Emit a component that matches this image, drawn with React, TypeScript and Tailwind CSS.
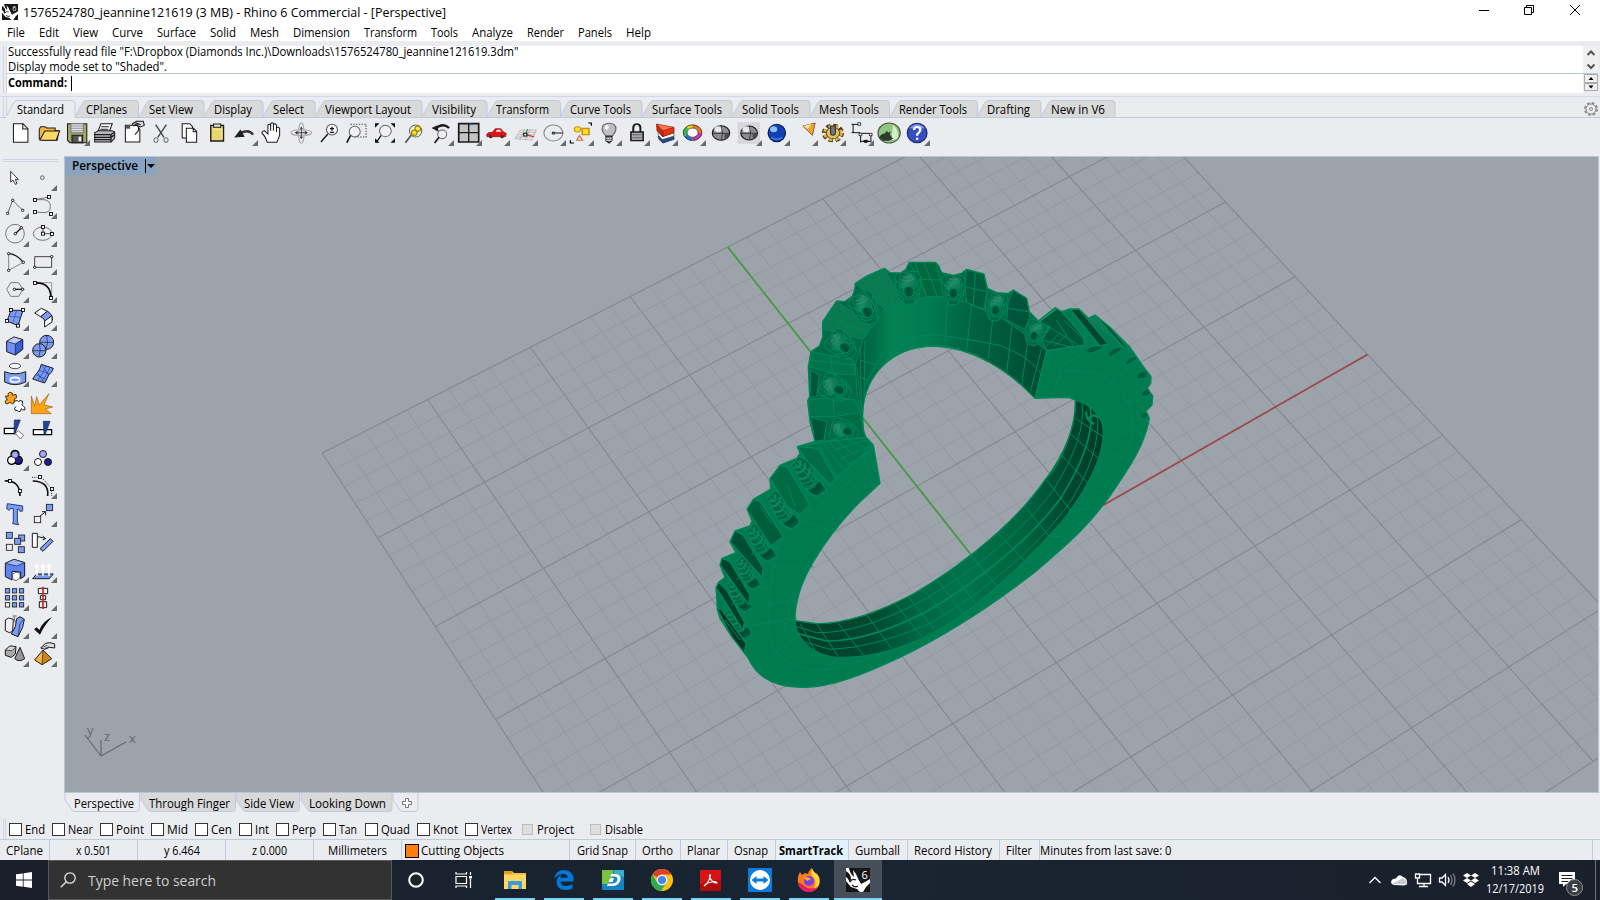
import { useLayoutEffect, useRef } from "react";
import type { ReactNode } from "react";

/* Text condensed horizontally to a given advance width. */
function Fit({ w, children, className = "" }: { w: number; children: string; className?: string }) {
  const ref = useRef<HTMLSpanElement>(null);
  useLayoutEffect(() => {
    const el = ref.current;
    if (!el) return;
    el.style.transform = "none";
    el.style.transform = `scaleX(${w / el.getBoundingClientRect().width})`;
  }, [w, children]);
  return (
    <span className={`block shrink-0 whitespace-pre ${className}`} style={{ width: w }}>
      <span ref={ref} className="inline-block origin-left">{children}</span>
    </span>
  );
}

/* ---------- construction grid ---------- */
type P = [number, number];
const anchors: [P, P][] = [
  [[-4, 4], [322.3, 453]],
  [[0, 4], [727.7, 247]],
  [[4, 0], [1367.5, 354.5]],
  [[-3, 0], [669.6, 752.4]],
];
function solveHomography(): number[] {
  const m: number[][] = [];
  for (const [[x, y], [u, v]] of anchors) {
    m.push([x, y, 1, 0, 0, 0, -u * x, -u * y, u]);
    m.push([0, 0, 0, x, y, 1, -v * x, -v * y, v]);
  }
  for (let i = 0; i < 8; i++) {
    let p = i;
    for (let r = i; r < 8; r++) if (Math.abs(m[r][i]) > Math.abs(m[p][i])) p = r;
    [m[i], m[p]] = [m[p], m[i]];
    for (let r = 0; r < 8; r++) {
      if (r === i) continue;
      const f = m[r][i] / m[i][i];
      for (let c = i; c < 9; c++) m[r][c] -= f * m[i][c];
    }
  }
  return m.map((row, i) => row[8] / row[i]);
}
const H = solveHomography();
const project = (x: number, y: number): P => {
  const d = H[6] * x + H[7] * y + 1;
  return [(H[0] * x + H[1] * y + H[2]) / d, (H[3] * x + H[4] * y + H[5]) / d];
};
const seg = (a: P, b: P) => {
  const [x1, y1] = project(...a);
  const [x2, y2] = project(...b);
  return `M${x1.toFixed(1)} ${y1.toFixed(1)}L${x2.toFixed(1)} ${y2.toFixed(1)}`;
};
let minor = "";
let major = "";
for (let i = -20; i <= 20; i++) {
  const t = i / 5;
  const d = seg([t, 4], [t, -4]) + seg([-4, t], [4, t]);
  if (i % 5 === 0) major += d;
  else minor += d;
}

/* ---------- ring ---------- */
const outer =
  "M345 604L330 545 323 482 329 470 325 380 333 335 358 318 368 292 368 245 410 183 434 185 456 170 464 150 466 130 500 108 553 85 570 98 602 99 618 88 628 67 707 67 715 76 725 98 760 106 785 100 800 88 852 102 862 145 890 158 925 160 940 150 980 175 988 215 1015 243 1065 203 1085 215 1110 207 1137 207 1165 235 1185 225 1230 262 1290 322 1330 380 1353 410 1352 430 1342 444 1358 468 1356 495 1338 513 1348 535C1335 610 1295 670 1262 720C1180 850 1100 915 1000 1000C870 1100 750 1180 600 1252C500 1298 400 1342 310 1342C210 1342 165 1300 145 1255L130 1235 95 1190 60 1135 52 1108 50 1070 48 1042 56 1027 75 1012 60 975 66 955 108 938 90 905 105 873 150 858 156 842 141 808 160 778 212 747 210 716 240 676 290 655 300 640 292 620Z";
const hole =
  "M540 730L520 615 498 592 490 575Q485 530 490 495C500 420 560 320 700 318C820 320 930 395 1005 475L1105 472 1126 480Q1128 540 1100 612T1035 720C960 830 815 960 640 1062Q470 1152 350 1151L285 1142Q284 1060 340 965T480 785Z";
const upperWall =
  "M1005 475L1040 332 985 290 910 237 800 187 735 172 680 170 600 190 555 207 520 255 488 300 466 375 470 450 484 540 490 560Q485 530 490 495C500 420 560 320 700 318C820 320 930 395 1005 475Z";
const lowerWall =
  "M1126 480Q1190 500 1208 555C1220 640 1160 750 1085 845C1000 940 900 1040 780 1130C660 1210 540 1255 410 1252C340 1245 290 1200 285 1142L350 1151Q470 1152 640 1062C815 960 960 830 1035 720Q1130 590 1126 480Z";

function Stone({ x, y, r = 0, s = 1 }: { x: number; y: number; r?: number; s?: number }) {
  return (
    <g transform={`translate(${x} ${y}) rotate(${r}) scale(${s})`}>
      <path d="M-40 -30L-30 -46 30 -46 40 -28 32 26 14 50 -14 50 -34 24Z" fill="#006541" stroke="#00875a" strokeWidth="3" />
      <ellipse cy="-16" rx="24" ry="28" fill="url(#gem)" />
      <path d="M-34 -18Q0 14 36 -18M-36 4Q0 46 36 4M-34 16Q0 58 34 16M-20 -44Q-36 0 -14 48M20 -44Q38 0 14 48M-40 -30L-14 10M40 -28L16 8" fill="none" stroke="#00875a" strokeWidth="3" />
      <circle cy="13" r="17" fill="url(#bore)" stroke="#00875a" strokeWidth="4" />
      <path d="M-14 -34Q0 -26 14 -34M-18 -24Q0 -14 18 -24" fill="none" stroke="#2a926d" strokeWidth="3" />
    </g>
  );
}

/* A setting on the left shoulder, seen nearly edge-on. */
function SideStone({ x, y, r = 0, s = 1 }: { x: number; y: number; r?: number; s?: number }) {
  return (
    <g transform={`translate(${x} ${y}) rotate(${r}) scale(${s})`} fill="none" strokeWidth="3">
      <path d="M-52 -22Q-20 -34 0 -22T56 -14L52 16Q20 30 -4 20T-50 8Z" fill="#00633f" stroke="#00875a" />
      <path d="M-44 -16Q-24 -4 -42 6M-30 -20Q-10 -4 -28 12M-14 -22Q10 0 -12 18" stroke="#12835c" strokeWidth="6" />
      <path d="M0 -20Q22 0 2 20M10 -18Q34 2 14 20M-50 0Q0 -10 56 2M-48 -8Q0 -20 54 -8" stroke="#008a5b" />
      <path d="M24 -16Q52 -16 56 -12L52 14Q36 24 18 22 34 6 24 -16Z" fill="url(#bore)" stroke="#00875a" />
    </g>
  );
}

function Ring() {
  return (
    <g transform="translate(700 240) scale(.3333333)" strokeLinejoin="round">
      <defs>
        <linearGradient id="upper" gradientUnits="userSpaceOnUse" x1="465" y1="0" x2="1040" y2="0">
          <stop offset="0" stopColor="#00553a" />
          <stop offset=".09" stopColor="#006c47" />
          <stop offset=".2" stopColor="#048255" />
          <stop offset=".4" stopColor="#007a50" />
          <stop offset=".6" stopColor="#006341" />
          <stop offset="1" stopColor="#004a30" />
        </linearGradient>
        <linearGradient id="lower" gradientUnits="userSpaceOnUse" x1="285" y1="0" x2="1212" y2="0">
          <stop offset="0" stopColor="#003c27" />
          <stop offset=".25" stopColor="#004a30" />
          <stop offset=".4" stopColor="#006743" />
          <stop offset=".55" stopColor="#00734b" />
          <stop offset=".75" stopColor="#00623f" />
          <stop offset=".88" stopColor="#00482f" />
          <stop offset="1" stopColor="#003b26" />
        </linearGradient>
        <linearGradient id="gem" x1="0" y1="0" x2="1" y2="1">
          <stop offset="0" stopColor="#00583a" />
          <stop offset=".45" stopColor="#1d8a64" />
          <stop offset="1" stopColor="#006b46" />
        </linearGradient>
        <linearGradient id="bore" x1="0" y1="0" x2="1" y2="0">
          <stop offset="0" stopColor="#007b51" />
          <stop offset=".4" stopColor="#004930" />
          <stop offset="1" stopColor="#006441" />
        </linearGradient>
        <clipPath id="silhouette"><path d={outer} /></clipPath>
      </defs>
      <path d={outer + hole} fillRule="evenodd" fill="#007b50" />
      <g clipPath="url(#silhouette)">
        <path d="M345 604L323 482 325 380 368 245 410 183 466 130 553 85 628 67 707 67 852 102 940 150 980 175 1015 243 1040 332 985 290 910 237 800 187 680 170 600 190 555 207 488 300 466 375 470 450 490 560 498 592Z" fill="#006a45" />
        <path d={upperWall} fill="url(#upper)" stroke="#00875a" strokeWidth="3" />
        <g fill="none" stroke="#00875a" strokeWidth="3">
          <path d="M742 174L735 322M815 192L800 332M880 218L865 356M936 255L920 400M985 292L965 436M1025 325L990 460" />
          <path d="M600 190L598 330M636 180L640 318M680 172L678 318" strokeWidth="2" />
          <path d="M495 440Q540 330 600 306T700 284T900 316Q990 350 1022 400M480 320L484 500M495 300L492 480M470 380L488 540" />
          <path d="M480 360L530 375M478 410L510 425" />
        </g>
        {/* bands between the upper stones */}
        <g stroke="#00875a" strokeWidth="3">
          <path d="M628 67L707 67 735 170 680 170 655 120Z" fill="#00673f" />
          <path d="M800 88L852 102 862 150 852 208 800 188 794 130Z" fill="#005c3b" />
          <path d="M940 150L980 175 990 228 975 268 920 240 925 185Z" fill="#00543a" />
          <path d="M466 130L553 85 612 188 555 207 520 180Z" fill="#0b7a52" />
          <path d="M410 183L368 245 374 268 490 298 512 258Z" fill="#0a7850" />
          <path d="M333 335L460 360 466 405 400 400 327 380Z" fill="#00734b" />
          <path d="M325 480L400 472 466 480 480 518 400 530 330 530Z" fill="#00714a" />
          <path d="M332 390L358 405 350 470 330 472ZM332 532L380 545 372 600 345 604Z" fill="#00553a" />
          <path d="M645 67L680 170M672 67L712 170M500 108L560 200M530 96L585 195M794 140L860 155M826 95L820 195M380 230L505 280M440 195L415 265M325 360L465 375M392 345L398 400M400 475L402 530M925 205L985 215M640 118L720 120" fill="none" />
        </g>
        <Stone x={625} y={142} r={-4} />
        <Stone x={760} y={148} s={0.92} />
        <Stone x={888} y={200} r={8} s={0.85} />
        <Stone x={1005} y={278} r={20} s={0.78} />
        <Stone x={496} y={205} r={-28} />
        <Stone x={425} y={315} r={-50} s={0.95} />
        <Stone x={406} y={445} r={-65} s={0.95} />
        <Stone x={432} y={572} r={-75} s={0.85} />
        {/* right shoulder */}
        <g stroke="#00875a" strokeWidth="4">
          <path d="M1015 243L1065 203 1085 215 1150 290 1155 315 1040 332 1025 300 1050 262Z" fill="#00573a" />
          <path d="M1110 207L1137 207 1225 312 1200 318Z" fill="#00462e" />
          <path d="M1185 225L1230 262 1290 330 1262 318Z" fill="#00502f" />
          <path d="M1048 262L1130 312M1070 240L1120 318M1028 300L1110 320M1090 240L1155 300M1040 318L1080 278M1060 320L1100 285M1130 235L1165 290M1150 270L1160 310" fill="none" strokeWidth="3" />
          <path d="M1018 243L1066 206" stroke="#1d9067" strokeWidth="8" />
          <path d="M1165 240L1185 225 1275 325" fill="#0f7d57" strokeWidth="3" />
          <path d="M1160 340Q1152 312 1215 318 1190 340 1160 340ZM1226 352Q1222 326 1262 320 1278 330 1226 352ZM1275 378Q1278 350 1310 348 1322 356 1275 378ZM1308 418Q1308 392 1338 394 1360 415 1308 418ZM1324 470Q1324 446 1345 447 1362 468 1324 470ZM1322 534Q1322 512 1344 520 1350 540 1322 534Z" fill="#005e3d" strokeWidth="3" />
        </g>
        <path d="M1040 332L1005 475" stroke="#00875a" strokeWidth="4" />
        <g fill="none" stroke="#00855a" strokeWidth="2.5">
          <path d="M1040 332L1150 316 1135 352 1090 372 1055 465M1090 395Q1230 380 1275 470T1275 630M1220 435L1290 380M1250 590L1345 540M1210 435L1170 480M1270 490L1350 470M1060 460L1085 395" />
          <path d="M1230 640L1290 660M1175 745L1230 765M1115 815L1185 800M1050 890L1125 888M975 965L1025 978M895 1030L935 1055M820 1098L825 1130M735 1150L733 1190M690 1190L688 1225" />
          <path d="M210 1170Q200 1260 330 1290 430 1295 600 1215M245 1265L210 1310M290 1080L190 1095M290 1135L150 1155M300 1185L190 1262M345 1240L240 1300M410 1252L350 1335M480 1245L440 1310M340 980L220 980M400 875L300 840" />
          <path d="M250 880Q200 1000 208 1190M400 740L415 748 455 720 485 780" />
        </g>
        {/* lower inner wall */}
        <path d={lowerWall} fill="url(#lower)" stroke="#00875a" strokeWidth="3" />
        <g fill="none" stroke="#00875a" strokeWidth="3">
          <path d="M1146 490Q1160 590 1060 750C980 860 820 1000 650 1090Q480 1180 350 1178L290 1160" />
          <path d="M1170 500Q1190 600 1085 770C1000 890 830 1030 670 1120Q500 1205 380 1203L290 1180" strokeWidth="5" />
          <path d="M1192 520Q1205 640 1105 795C1010 920 850 1060 690 1150Q520 1225 390 1228L310 1205" />
          <path d="M300 1150L345 1232M350 1151L415 1250M415 1150L490 1245M500 1125L575 1225M585 1090L665 1190M625 1070L700 1165M665 1045L740 1130M710 1020L790 1120M750 990L830 1095M815 948L900 1050M895 880L980 970M975 800L1050 892M1040 720L1115 815M1085 645L1168 735M1110 580L1200 660M1125 535L1210 590" />
          <path d="M1158 515Q1160 545 1182 552M1165 540Q1176 518 1196 532" strokeWidth="7" />
        </g>
        {/* left shoulder */}
        <g stroke="#00875a" strokeWidth="4">
          <path d="M292 620L380 604 498 592 520 618 410 712 390 735 315 655Z" fill="#00734b" />
          <path d="M355 612L412 712M368 608L432 690M385 604L450 675M400 630L500 600M420 655L515 618M405 600L470 650M430 680L520 630M440 598L500 625" fill="none" strokeWidth="3" />
        </g>
        <SideStone x={322} y={712} r={47} s={1.2} />
        <SideStone x={246} y={812} r={47} s={1.15} />
        <SideStone x={180} y={910} r={50} s={1.1} />
        <SideStone x={140} y={1000} r={53} s={0.95} />
        <SideStone x={115} y={1068} r={52} s={0.95} />
        <SideStone x={112} y={1150} r={48} s={0.95} />
        <g stroke="#00875a" strokeWidth="4">
          <path d="M210 716L240 676 262 680 330 795 300 825 262 800Z" fill="#006a45" />
          <path d="M141 808L160 778 180 785 250 890 212 918Z" fill="#005e3d" />
          <path d="M90 905L105 873 130 885 190 985 186 1012Z" fill="#004e33" />
          <path d="M60 975L66 955 90 965 150 1065 146 1094Z" fill="#00432b" />
          <path d="M48 1042L56 1027 80 1050 133 1145 130 1172Z" fill="#003f28" />
          <path d="M52 1108L62 1105 138 1210 133 1240 95 1190Z" fill="#003824" />
          <path d="M292 620L315 655 390 735 408 718 355 625Z" fill="#006d48" />
          <path d="M285 800L262 735M215 850L180 800M155 945L175 905 130 890M110 1020L130 990M95 1095L110 1075M120 1200L75 1140" fill="none" strokeWidth="3" />
        </g>
      </g>
      <path d={outer + hole} fill="none" stroke="#008558" strokeWidth="4" />
    </g>
  );
}

function Viewport() {
  return (
    <svg viewBox="65 157 1533 635" className="block h-full w-full" fill="none">
      <rect x="65" y="157" width="1533" height="635" fill="#9da3aa" />
      <path d={minor} stroke="#92989f" strokeWidth="1" />
      <path d={major} stroke="#86868d" strokeWidth="1.1" />
      <path d={seg([0, 4], [0, 0])} stroke="#459a45" strokeWidth="1.8" />
      <path d={seg([0, 0], [4, 0])} stroke="#9c4a4a" strokeWidth="1.8" />
      <Ring />
      <path d="M85 735L101 756M101 756V740M101 756L126 742" stroke="#66696d" strokeWidth="1.2" />
      <g fill="#66696d" className="font-['Open_Sans',sans-serif] text-[13px]">
        <text x="87" y="735">y</text>
        <text x="104" y="740.500">z</text>
        <text x="129" y="743">x</text>
      </g>
    </svg>
  );
}

/* ---------- icons ---------- */
const K = "#1b1b1b";
const blue = "#7b9cf5";

function Cell({ box, flyout, children }: { box: string; flyout?: boolean; children: ReactNode }) {
  return (
    <div className="relative h-7 w-7 shrink-0">
      <svg viewBox={box} preserveAspectRatio="none" className="block h-7 w-7" fill="none" stroke={K} strokeWidth="3">
        {children}
      </svg>
      {flyout && (
        <svg viewBox="0 0 6 6" className="absolute right-0 bottom-[1px] h-1.5 w-1.5">
          <path d="M6 0V6H0Z" fill="#6a6a6e" />
        </svg>
      )}
    </div>
  );
}

const sq = (x: number, y: number, s = 9) => <rect x={x - s / 2} y={y - s / 2} width={s} height={s} fill="#fff" stroke="#000" strokeWidth="2.6" />;
const pt = (x: number, y: number, r = 3.6) => <circle cx={x} cy={y} r={r} fill="#fff" stroke="#000" strokeWidth="2.6" />;
const box3 = (x: number, y: number, s: number, fill: string) => <rect x={x} y={y} width={s} height={s} fill={fill} stroke="#222" strokeWidth="2.6" />;

const mainA: [ReactNode, boolean?][] = [
  [<path d="M39 371H67L81 386V427H39ZM66 371V387H81" fill="#fff" />],
  [<><path d="M114 388V417L122 421H166L171 392H160V384H136L130 380H118Z" fill="#f0b840" /><path d="M116 420L130 393H173L163 421Z" fill="#fcd765" /></>],
  [<><path d="M196 371H252V428H203L196 421Z" fill="#a8a860" /><path d="M206 371H242V398H206Z" fill="#e4e8ec" stroke="#777" /><path d="M206 378H242M206 385H242M206 392H242" stroke="#8a8f96" /><path d="M209 406H240V428H209Z" fill="#555" /><path d="M228 410H236V424H228Z" fill="#eee" stroke="none" /></>, true],
  [<><path d="M284 396L293 371H326L317 396Z" fill="#fff" /><path d="M294 380H316M291 388H314" /><path d="M275 398L286 392H325L333 396V414L323 426H275Z" fill="#b9b9bd" /><path d="M275 404H322L333 396M275 412H322L333 404M275 419H322M322 404V426" strokeWidth="4" /></>],
  [<><path d="M364 376H398L406 388V426H364Z" fill="#fff" /><path d="M366 380H378M366 384H378" /><path d="M384 372L396 364H416L419 376 408 381 396 376 388 378Z" fill="#ddd" /><path d="M390 372L402 376M394 368L408 374M402 380V392L392 404" /></>],
  [<><path d="M452 374L476 412M483 374L458 412" strokeWidth="4" stroke="#444" /><ellipse cx="453" cy="420" rx="6" ry="7" stroke="#777" /><ellipse cx="482" cy="420" rx="6" ry="7" stroke="#777" /></>],
  [<><path d="M529 371H551L559 380V414H529Z" fill="#fff" /><path d="M541 385H562L571 394V427H541ZM561 385V395H571" fill="#fff" /></>],
  [<><path d="M612 376H649V423H612Z" fill="#e8d56e" strokeWidth="4" /><path d="M620 372H641V382H620Z" fill="#e4e4e4" /><path d="M618 388H644V416" stroke="#f5eaa0" /></>],
  [<><path d="M735 404Q722 386 698 400" stroke="#333" strokeWidth="7" /><path d="M683 411L698 391 708 409Z" fill="#222" /></>, true],
  [<path d="M776 427Q770 408 763 402T768 392L778 402V376Q782 370 786 376V392 371Q790 365 794 371V392 374Q799 368 803 376V396 384Q809 378 812 386V406L804 427Z" fill="#fff" />],
  [<><ellipse cx="875" cy="398" rx="30" ry="9" stroke="#aaa" /><ellipse cx="875" cy="399" rx="8" ry="31" stroke="#aaa" /><path d="M862 398H888M875 386V412" strokeWidth="3" stroke="#444" /><path d="M856 398L864 392V404ZM894 398L886 392V404ZM870 386H880L875 380ZM870 410H880L875 417Z" fill="#333" stroke="none" /></>],
  [<><circle cx="964" cy="389" r="16" stroke="#555" fill="#f6f6f8" /><path d="M958 386H970M964 380V392M958 397H970M952 402L932 426" strokeWidth="4" /></>],
  [<><path d="M1018 373H1063V411H1030" strokeDasharray="4 4" stroke="#444" /><circle cx="1030" cy="395" r="16" stroke="#666" fill="#f0f0f3" /><path d="M1018 406L1007 428" strokeWidth="5" /></>],
  [<><circle cx="1119" cy="393" r="17" stroke="#666" fill="#f0f0f3" /><path d="M1107 406L1092 428" strokeWidth="4" /><path d="M1089 370H1102L1089 383ZM1134 370H1147V383ZM1147 428H1134L1147 415ZM1089 428V415L1102 428Z" fill="#111" stroke="none" /></>],
  [<><circle cx="1207" cy="393" r="18" stroke="#666" fill="#f0f0e0" /><path d="M1194 406L1177 428" strokeWidth="5" stroke="#555" /><circle cx="1213" cy="386" r="8" fill="#ffe640" stroke="#8a7a00" /><circle cx="1203" cy="398" r="8" fill="#ffd820" stroke="#8a7a00" /></>],
  [<><path d="M1304 384Q1286 366 1264 386" strokeWidth="7" /><path d="M1253 384L1270 376 1274 396Z" fill="#222" stroke="none" /><circle cx="1284" cy="403" r="13" stroke="#666" fill="#f0f0f3" /><path d="M1275 412L1262 429" strokeWidth="5" /></>, true],
  [<><path d="M1332 371H1390V426H1332Z" fill="#c4c4c4" strokeWidth="5" /><path d="M1361 371V426M1332 398H1390" strokeWidth="4" /><path d="M1362 372H1372" stroke="#1848c0" strokeWidth="4" /></>, true],
  [<><path d="M1413 404Q1416 396 1430 397L1438 386H1454L1462 396 1470 400 1468 410H1414Z" fill="#e01414" stroke="#8a0c0c" strokeWidth="2" /><path d="M1440 395L1443 389H1452L1456 395Z" fill="#fff" stroke="none" /><circle cx="1425" cy="410" r="5" fill="#333" stroke="none" /><circle cx="1458" cy="410" r="5" fill="#333" stroke="none" /></>, true],
];

const mainB: [ReactNode, boolean?][] = [
  [<><path d="M38 146L52 120H92L80 150ZM46 134H88M62 118L50 150M76 118L64 150M42 141H84M50 127H90" stroke="#aaa" strokeWidth="2" /><path d="M64 134L70 118" stroke="#1a9a3a" /><path d="M66 134L86 140" stroke="#d22" /><path d="M60 130H68V138H60Z" fill="#fff" /></>, true],
  [<><circle cx="135" cy="129" r="24" stroke="#8a8a8e" /><path d="M135 129H159" /><circle cx="135" cy="129" r="3" fill="#fff" /></>, true],
  [<><circle cx="196" cy="118" r="8" fill="#ffe030" stroke="#d0960c" /><path d="M208 115H225V134H208Z" fill="#ffe030" stroke="#d08a0c" strokeWidth="4" /><path d="M194 151L201 137 209 151Z" stroke="#c87040" /><path d="M223 99H231V107M178 151V159H187" stroke="#000" /></>, true],
  [<><path d="M258 118Q258 100 276 100T293 118Q292 128 284 138H268Q260 130 258 118Z" fill="#bfbfc3" stroke="#666" /><path d="M268 139H283V152L276 159 268 152Z" fill="#777" /><path d="M268 145H283M268 151H283" stroke="#ccc" /><ellipse cx="270" cy="112" rx="5" ry="7" fill="#f4f4f6" stroke="none" /></>, true],
  [<><path d="M337 126V112Q338 102 346 102T355 112V126" strokeWidth="5" /><path d="M331 126H362V152H331Z" fill="#a8a8ac" strokeWidth="4" /><path d="M335 134H358M335 143H358" stroke="#666" /></>, true],
  [<><path d="M412 158V148L440 138V128L412 138 400 124V134Z" fill="#fff" stroke="#555" strokeWidth="2" /><path d="M400 138L412 150 440 140V148L412 159 402 148Z" fill="#1a50b0" stroke="#222" strokeWidth="2" /><path d="M396 102L412 122V141L397 122Z" fill="#c8280c" stroke="#811" strokeWidth="2" /><path d="M412 122L440 112V128L412 140Z" fill="#e8330f" stroke="#811" strokeWidth="2" /><path d="M396 102L440 112 412 122Z" fill="#ff7a48" stroke="#a22" strokeWidth="2" /></>, true],
  [<><circle cx="487" cy="128" r="19" stroke="#e6dc10" strokeWidth="9" /><path d="M487 109A19 19 0 0 1 506 128" stroke="#f07020" strokeWidth="9" /><path d="M506 128A19 19 0 0 1 487 147" stroke="#d030c0" strokeWidth="9" /><path d="M487 147A19 19 0 0 1 470 136" stroke="#2070e0" strokeWidth="9" /><path d="M470 136A19 19 0 0 1 474 114" stroke="#30c050" strokeWidth="9" /><circle cx="487" cy="128" r="23.500" strokeWidth="2" /><circle cx="487" cy="128" r="14" strokeWidth="2" fill="#fff" /></>, true],
  [<><circle cx="559" cy="129" r="22" fill="#8e8e92" /><ellipse cx="552" cy="118" rx="10" ry="9" fill="#e8e8ea" stroke="none" /><path d="M568 132H580Q578 144 568 149Z" fill="#4c4c50" stroke="none" /><path d="M537 130H581M559 107Q566 128 560 151" strokeWidth="2" /></>],
  [<><path d="M602 98H656V160H602Z" fill="#d9d9dd" stroke="#bbb" strokeDasharray="2 3" strokeWidth="2" /><circle cx="630" cy="129" r="21" fill="#8e8e92" /><ellipse cx="623" cy="118" rx="10" ry="9" fill="#e8e8ea" stroke="none" /><path d="M639 132H650Q648 144 639 148Z" fill="#4c4c50" stroke="none" /><path d="M609 130H651M630 108Q637 128 631 150" strokeWidth="2" /></>, true],
  [<><ellipse cx="700" cy="129" rx="22" ry="26" fill="#1240b4" stroke="#0a1c50" /><ellipse cx="692" cy="118" rx="9" ry="9" fill="#8fc0ff" stroke="none" /><path d="M686 142Q700 154 714 142" stroke="#3a78e8" strokeWidth="5" /></>, true],
  [<><path d="M766 108L797 99 790 136Z" fill="#f2a52c" stroke="#5a3a08" strokeWidth="2" /><path d="M767 108L788 101 778 118Z" fill="#ffe2a0" stroke="none" /></>, true],
  [<><circle cx="842" cy="129" r="21" stroke="#4a3b10" strokeWidth="14" strokeDasharray="10 6.5" /><circle cx="842" cy="129" r="20" stroke="#d8b050" strokeWidth="10" strokeDasharray="8 8.5" /><circle cx="842" cy="129" r="17" fill="#e3c060" stroke="#6a5418" /><path d="M836 108H848V132Q842 140 836 132Z" fill="#777" stroke="#333" /></>, true],
  [<><path d="M893 103V128M889 103H909M889 128H911M912 132V158M938 132V158M915 130H934M912 154H938M918 154L924 150V158ZM932 154L926 150V158Z" stroke="#000" strokeWidth="2.5" /><path d="M905 98H912V106H905ZM908 130H915V137H908ZM934 130H941V137H934Z" fill="#fff" stroke="#000" strokeWidth="2" /></>, true],
  [<><ellipse cx="984" cy="129" rx="28" ry="30" fill="#94c483" stroke="#4c5a4a" /><path d="M994 104Q1012 124 1004 148L990 150Z" fill="#d4eec6" stroke="none" /><path d="M958 144Q962 132 974 130L978 122 982 128 988 124 986 134 994 146 984 152 970 152Z" fill="#2c3c2a" stroke="none" /></>],
  [<><ellipse cx="1055" cy="129" rx="25" ry="29" fill="#3450c0" stroke="#1a2a70" /><path d="M1035 115Q1055 90 1075 115" fill="#7d98ee" stroke="none" /><path d="M1047 120Q1048 110 1056 111T1063 121Q1060 128 1055 133V137M1055 143V149" stroke="#fff" strokeWidth="6" /></>, true],
];

const sideA: [ReactNode, boolean?][] = [
  [<path d="M32 64V96L39 90 46 103 51 101 46 88H55Z" fill="#fff" strokeWidth="2.6" />],
  [<circle cx="127" cy="83" r="5.5" fill="#fff" stroke="#555" />, true],
  [<><path d="M23 190L38 151 68 181" stroke="#666" />{pt(23, 190)}{pt(38, 151)}{pt(68, 181)}</>, true],
  [<><path d="M105 149H132Q152 152 151 170T132 188L105 186M105 149L147 141" stroke="#777" />{sq(105, 150)}{sq(147, 141)}{sq(105, 186)}{sq(153, 192)}</>, true],
  [<><circle cx="45" cy="251" r="28" stroke="#777" /><path d="M46 251L64 233" strokeWidth="4" />{pt(46, 251)}{pt(64, 233)}</>, true],
  [<><ellipse cx="128" cy="251" rx="28" ry="20" stroke="#777" /><path d="M129 231V251H156" stroke="#555" />{sq(129, 231)}{sq(129, 251)}{sq(156, 252)}</>, true],
  [<><path d="M26 361V311M26 361L70 337" stroke="#888" /><path d="M26 311Q50 312 70 337" stroke="#111" strokeWidth="3.5" />{pt(26, 311)}{pt(26, 361)}{pt(70, 337)}</>, true],
  [<><path d="M104 320H155V352H104Z" stroke="#444" />{pt(155, 320)}{pt(104, 352)}</>, true],
  [<><path d="M32 398H56L69 418 56 439H32L20 418Z" stroke="#777" /><path d="M43 418H68" strokeWidth="4" />{pt(43, 418)}{pt(68, 418)}</>, true],
  [<><path d="M104 398H155V442" stroke="#999" /><path d="M104 399Q152 396 153 444" strokeWidth="5" stroke="#000" />{sq(105, 399)}{sq(153, 444)}</>, true],
  [<><path d="M33 481L69 481 54 527 21 513Z" fill={blue} /><path d="M28 498L63 502M50 481L38 520" stroke="#334a9a" strokeWidth="2" />{sq(33, 480)}{sq(69, 480)}{sq(21, 513)}{sq(54, 527)}</>, true],
  [<><path d="M104 489L124 475 142 484 122 500Z" fill="#fff" /><path d="M122 500L142 484Q156 490 157 510L135 514Q134 506 122 500Z" fill={blue} /><path d="M134 513L156 497V516L134 531Z" fill="#fff" /></>, true],
  [<><path d="M20 574L42 561 68 569V598L46 615 20 605Z" fill="#6f90fa" /><path d="M20 574L42 561 68 569 46 582Z" fill="#bccbfb" strokeWidth="2" /><path d="M46 582L68 569V598L46 615Z" fill="#3a5fd4" strokeWidth="2" /></>, true],
  [<><circle cx="140" cy="577" r="21" fill={blue} /><circle cx="118" cy="601" r="20" fill={blue} /><path d="M120 577H160M140 556Q146 580 138 598M98 602H138M118 582Q124 600 117 620" strokeWidth="2" /></>, true],
  [<><ellipse cx="45" cy="648" rx="17" ry="8" stroke="#555" fill="#f5f5f7" /><path d="M14 665Q45 678 77 665V696Q45 712 14 696Z" fill={blue} /><ellipse cx="45" cy="689" rx="14" ry="7" stroke="#fff" strokeWidth="5" /></>, true],
  [<><path d="M124 643L160 655Q156 668 146 675 142 685 134 699L98 687Q106 674 112 668 120 660 124 643Z" fill={blue} /><path d="M116 660L150 672M106 674L140 688M138 648Q130 672 112 692M150 652Q142 676 124 696M112 668L134 699M124 643L146 675" stroke="#24409a" strokeWidth="2" /></>, true],
  [<><path d="M16 738L25 739Q22 727 31 727T37 736L48 733 50 743Q42 744 43 750T38 762L28 756Q24 766 17 760 13 750 22 750Z" fill="#ffa51c" stroke="#4a3008" /><path d="M42 758Q44 750 52 752 56 758 60 752 70 750 68 760 62 764 70 768 78 772 74 780 66 780 64 776 64 786 55 785 52 778 46 782 40 774 48 770 46 764Z" fill="#fff" /></>],
  [<path d="M94 791V738L104 768 110 740 118 764 147 731 132 764 158 771 136 777 154 791Z" fill="#ffa212" stroke="#7a4200" strokeWidth="1.500" />],
];

const sideB: [ReactNode, boolean?][] = [
  [<><path d="M13 85H46V101H13Z" fill="#fff" strokeWidth="3.6" stroke="#000" /><path d="M43 60H61L45 101H42Z" fill="#25429a" stroke="#14255c" strokeWidth="2" /><path d="M46 100L55 92 71 106 61 117Z" fill="#fff" stroke="#777" /></>],
  [<><path d="M100 89H155V104H100Z" fill="#fff" strokeWidth="3.6" stroke="#000" /><path d="M130 64H150L136 103H132Z" fill="#25429a" stroke="#14255c" strokeWidth="2" /></>],
  [<><g strokeWidth="8" stroke="#000"><circle cx="45" cy="163" r="10" /><circle cx="35" cy="181" r="10" /><circle cx="55" cy="181" r="10" /></g><circle cx="35" cy="181" r="10" fill="#fff" stroke="none" /><circle cx="55" cy="181" r="10" fill="#1e1e8c" stroke="none" /><circle cx="45" cy="164" r="10" fill="#a8a8ff" stroke="#223" strokeWidth="2" /></>, true],
  [<><circle cx="129" cy="162" r="10.5" fill="#a8a8ff" /><circle cx="114" cy="186" r="10.5" fill="#fff" /><circle cx="144" cy="186" r="10.5" fill="#1e1e8c" /></>],
  [<><path d="M14 243Q60 240 60 288" strokeWidth="5" stroke="#111" />{sq(30, 243)}{sq(60, 273)}</>],
  [<><path d="M96 232H112M130 238L150 260M155 272V288" strokeDasharray="3 4" /><path d="M98 243Q148 244 143 288" strokeWidth="5" stroke="#111" />{sq(120, 231)}{sq(156, 267)}</>, true],
  [<path d="M22 311L68 318V333L60 334 58 328 52 327V366L56 374 38 371 40 364V326L32 325 28 331 20 326Z" fill={blue} stroke="#223a80" />],
  [<><path d="M118 350L136 336M126 335H137V346" />{box3(103, 349, 19, "#eee")}{box3(139, 313, 19, blue)}</>, true],
  [<>{box3(19, 397, 18, blue)}{box3(56, 405, 18, blue)}{box3(44, 415, 18, blue)}{box3(19, 433, 18, "#eee")}{box3(55, 440, 18, blue)}</>],
  [<><path d="M97 400H112V442H97Z" fill="#fff" /><path d="M114 410L136 415M128 408L137 416 128 420" /><path d="M120 446L151 416 159 424 129 454Z" fill={blue} /></>],
  [<><path d="M16 490L42 478 74 488V528L62 536V516L36 514V540L16 530Z" fill="#5f82f2" /><path d="M16 490L42 478 74 488 50 498Z" fill="#9db4fa" strokeWidth="2" /><path d="M38 522L48 516 60 520V534L48 542 38 538Z" fill="#fff" strokeWidth="2" /></>, true],
  [<><path d="M110 522H160L148 536H98Z" fill={blue} /><path d="M111 527V498M129 527V498M147 527V498" stroke="#fff" strokeWidth="5" /><path d="M103 502L111 490 119 502ZM121 502L129 490 137 502ZM139 502L147 490 155 502Z" fill="#fff" stroke="none" /></>, true],
  [<>{[566, 587, 608].map((y) => [16, 37, 58].map((x) => <g key={`${x}-${y}`}>{box3(x, y, 13, x === 16 && y === 608 ? "#eee" : blue)}</g>))}</>, true],
  [<><path d="M115 565H143V581H115ZM121 587H137V599H121ZM118 605H140V623H118Z" fill="#eee" /><path d="M129 560V627" stroke="#d42020" strokeWidth="5" /></>, true],
  [<><path d="M16 660L26 654 40 658 38 694 28 698 16 692Z" fill="#f0f0f0" /><path d="M50 656L60 650 73 658 68 682 54 710 34 702 46 680Z" fill={blue} /><path d="M73 658L60 670 54 710M42 650L46 668M38 648H50" strokeWidth="2" /></>, true],
  [<path d="M102 688L110 682 118 690Q130 662 156 652 134 674 120 704Z" fill="#111" stroke="none" />, true],
  [<><path d="M16 750L30 738 48 740 46 762 34 772 16 766Z" fill="#aaa" /><path d="M16 750L30 738 48 740 36 752Z" fill="#d8d8d8" strokeWidth="2" /><path d="M60 742L44 776Q58 788 74 776Z" fill="#999" /></>, true],
  [<><path d="M104 780L129 750 155 776 126 794Z" fill="#f5b63a" /><path d="M129 750L155 776 126 794Z" fill="#c98516" strokeWidth="2" /><path d="M122 744L136 730 150 728 164 732V744L148 742 134 748Z" fill="#ddd" /><path d="M128 742L142 736M134 746L146 740" strokeWidth="2" /></>, true],
];

/* ---------- tabs ---------- */
function TopTab({ label, w, tw, active }: { label: string; w: number; tw: number; active?: boolean }) {
  return (
    <div className="relative flex h-[17px] shrink-0 items-center justify-center pt-[3px] pr-[3px]" style={{ width: w }}>
      <svg viewBox={`0 0 ${w} 17`} className="absolute inset-0 h-full w-full overflow-visible" fill="none">
        <path d={`M-1 17L7 2.5Q8 .5 11 .5H${w - 4}Q${w - 1} .5 ${w - 1} 3.500V17`} fill={active ? "#ebecf0" : "#d9d9d9"} stroke="#c0c9de" />
        {active && <path d={`M-1 17H${w - 1}`} stroke="#ebecf0" strokeWidth="2" />}
      </svg>
      <Fit w={tw} className="relative">{label}</Fit>
    </div>
  );
}

function BottomTab({ label, w, tw, active }: { label?: string; w: number; tw?: number; active?: boolean }) {
  return (
    <div className="relative flex h-[19px] shrink-0 items-center justify-center pt-[3px] pl-[2px]" style={{ width: w }}>
      <svg viewBox={`0 0 ${w} 19`} className="absolute inset-0 h-full w-full overflow-visible" fill="none">
        <path d={`M0 0V7L7 17Q8 18.500 10 18.500H${w - 4}Q${w - 1} 18.500 ${w - 1} 15.500V0`} fill={active ? "#ebecf0" : "#d9d9d9"} stroke="#c0c9de" />
      </svg>
      {label && tw ? (
        <Fit w={tw} className="relative">{label}</Fit>
      ) : (
        <svg viewBox="0 0 10 10" className="relative mb-[2px] h-2.5 w-2.5" fill="#fff" stroke="#777">
          <path d="M3.500 .5H6.500V3.500H9.500V6.500H6.500V9.500H3.500V6.500H.5V3.500H3.500Z" />
        </svg>
      )}
    </div>
  );
}

const menus: [string, number][] = [["File", 18], ["Edit", 20], ["View", 25], ["Curve", 31], ["Surface", 39], ["Solid", 26], ["Mesh", 29], ["Dimension", 57], ["Transform", 53], ["Tools", 27], ["Analyze", 41], ["Render", 37], ["Panels", 34], ["Help", 25]];
const topTabs: [string, number, number][] = [["Standard", 69, 47], ["CPlanes", 63.5, 41], ["Set View", 65, 44], ["Display", 59, 38], ["Select", 52, 31], ["Viewport Layout", 107, 86], ["Visibility", 65, 44], ["Transform", 73.5, 53], ["Curve Tools", 82, 61], ["Surface Tools", 90, 70], ["Solid Tools", 78, 57], ["Mesh Tools", 79.5, 60], ["Render Tools", 87.5, 68], ["Drafting", 64, 43], ["New in V6", 74, 54]];
const snaps: [string, number, number][] = [["End", 43, 20], ["Near", 48, 25], ["Point", 51, 28], ["Mid", 44, 21], ["Cen", 44, 21], ["Int", 37, 14], ["Perp", 47, 24], ["Tan", 42, 18], ["Quad", 52, 29], ["Knot", 48, 25], ["Vertex", 56.5, 31]];
const panes: [string, number, number, boolean?][] = [["Grid Snap", 66, 51], ["Ortho", 44.5, 31], ["Planar", 47, 33], ["Osnap", 48, 34], ["SmartTrack", 73, 64, true], ["Gumball", 59, 45], ["Record History", 92, 78], ["Filter", 40, 26]];

function Rhino({ className }: { className: string }) {
  return (
    <svg viewBox="0 0 24 24" className={className}>
      <rect width="24" height="24" fill="#161616" />
      <path d="M0 3Q5 6 5 11L4 15Q2 10 0 9V13L5 19 11 21 14 24 17 24 20 19 24 15V11L19 14 15 16Q12 11 10 6L7 2 8 9Q4 6 3 0H0Z" fill="#fff" />
      <path d="M4 14Q6 10 10 12M6 17Q9 20 12 18" fill="none" stroke="#161616" strokeWidth="1.200" />
      <text x="15.500" y="10.500" fill="#fff" className="font-['Open_Sans',sans-serif] text-[11px]">6</text>
    </svg>
  );
}

function TaskApp({ children, active }: { children: ReactNode; active?: boolean }) {
  return (
    <div className={active ? "relative ml-px flex h-10 w-12 shrink-0 items-center justify-center bg-[#464f59]" : "relative flex h-10 w-[49px] shrink-0 items-center justify-center"}>
      {children}
      <div className={active ? "absolute bottom-0 left-0 h-0.5 w-full bg-[#78d4f8]" : "absolute bottom-0 left-[5px] h-0.5 w-10 bg-[#78d4f8]"} />
    </div>
  );
}

export default function App() {
  return (
    <div className="flex h-[900px] w-[1600px] flex-col overflow-hidden bg-[#ebecf0] font-['Open_Sans',sans-serif] text-[12px] leading-none text-black">
      {/* title bar */}
      <div className="flex h-6 shrink-0 items-center bg-white pl-[2px]">
        <Rhino className="h-4 w-4" />
        <Fit w={423} className="ml-[5px] pt-px text-[12.5px] leading-4">1576524780_jeannine121619 (3 MB) - Rhino 6 Commercial - [Perspective]</Fit>
        <svg viewBox="1470 0 130 24" className="ml-auto h-6 w-[130px]" fill="none" stroke="#000">
          <path d="M1479 10.500H1489M1524.500 7.500H1531.500V14.500H1524.500ZM1526.500 7V5.500H1533.500V12.500H1532M1570 5L1580 15M1580 5L1570 15" />
        </svg>
      </div>

      {/* menu bar */}
      <div className="flex h-[17px] shrink-0 items-center gap-[14px] bg-white pt-px pl-[7px]">
        {menus.map(([m, w]) => <Fit key={m} w={w}>{m}</Fit>)}
      </div>

      {/* command area */}
      <div className="flex h-[56px] shrink-0 border-b border-[#d3d9e8] pt-[5px] pb-[3px]">
        <div className="ml-[3px] h-full w-[4px] border-x border-[#d0d4e2]" />
        <div className="flex w-[1591px] flex-col bg-white">
          <div className="flex h-7 border-b border-[#b9c4da]">
            <div className="-mt-px flex flex-1 flex-col pl-px">
              <Fit w={510.5} className="self-start leading-[13px]">{'Successfully read file "F:\\Dropbox (Diamonds Inc.)\\Downloads\\1576524780_jeannine121619.3dm"'}</Fit>
              <Fit w={159} className="mt-[2px] self-start leading-[13px]">Display mode set to "Shaded".</Fit>
            </div>
            <svg viewBox="0 0 15 27" className="h-[27px] w-[15px] bg-[#f0f0f0]" fill="none" stroke="#555" strokeWidth="2">
              <path d="M4.500 9L8 5.500 11.500 9M4.500 18.500L8 22 11.500 18.500" />
            </svg>
          </div>
          <div className="flex h-[19px]">
            <div className="flex flex-1 items-center pb-px pl-px">
              <Fit w={59} className="font-bold">Command:</Fit>
              <div className="ml-1 h-[15px] w-px bg-black" />
            </div>
            <svg viewBox="0 0 15 19" className="h-[19px] w-[15px] bg-[#ebecf0]" fill="#efefef" stroke="#aaa">
              <path d="M1.500 .5H14.500V8.500H1.500ZM1.500 9.500H14.500V16.500H1.500Z" />
              <path d="M5.500 6H10.500L8 3ZM5.500 11.500H10.500L8 14.500Z" fill="#000" stroke="none" />
            </svg>
          </div>
        </div>
      </div>

      {/* tool tabs */}
      <div className="flex h-[21px] shrink-0 items-end border-b border-[#c0c9de]">
        <div className="ml-[3px] h-full w-[4px] border-x border-[#d0d4e2]" />
        {topTabs.map(([t, w, tw], i) => <TopTab key={t} label={t} w={w} tw={tw} active={i === 0} />)}
        <svg viewBox="0 0 16 16" className="mr-[1px] ml-auto h-4 w-4" fill="none" stroke="#8c8c90">
          <circle cx="8" cy="8" r="6" strokeWidth="2" strokeDasharray="2.700 2" />
          <circle cx="8" cy="8" r="5" />
          <circle cx="8" cy="8" r="1.500" />
        </svg>
      </div>

      {/* standard toolbar */}
      <div className="flex h-[38px] shrink-0 pt-px pl-[6px]">
        {mainA.map(([icon, fly], i) => (
          <Cell key={i} box={`${((6 + 28 * i) * 2.9037).toFixed(1)} 357 81.3 84`} flyout={fly}>{icon}</Cell>
        ))}
        {mainB.map(([icon, fly], i) => (
          <Cell key={i} box={`${((10 + 28 * i) * 2.529).toFixed(1)} 87 70.8 84`} flyout={fly}>{icon}</Cell>
        ))}
      </div>

      {/* side bar and viewport */}
      <div className="flex h-[637px] shrink-0">
        <div className="flex w-16 shrink-0 flex-col pt-[3px]">
          <div className="ml-[3px] h-[3px] w-[55px] border-y border-[#cdd2e0]" />
          <div className="mt-[2px] ml-px grid w-14 grid-cols-2">
            {sideA.map(([icon, fly], i) => (
              <Cell key={i} box={`${3 + 84 * (i % 2)} ${42 + 84 * Math.floor(i / 2)} 84 84`} flyout={fly}>{icon}</Cell>
            ))}
            {sideB.map(([icon, fly], i) => (
              <Cell key={i} box={`${3 + 84 * (i % 2)} ${48 + 84 * Math.floor(i / 2)} 84 84`} flyout={fly}>{icon}</Cell>
            ))}
          </div>
        </div>
        <div className="relative w-[1535px] border border-[#b9c4da]">
          <Viewport />
          <div className="absolute top-0 left-0 flex h-[18px] w-[91px] items-center bg-[#8aa3c1] pl-[7px]">
            <Fit w={66} className="font-semibold">Perspective</Fit>
            <div className="ml-[7px] h-[14px] w-px bg-black" />
            <svg viewBox="0 0 8 4" className="ml-px h-1 w-2"><path d="M0 0H8L4 4Z" /></svg>
          </div>
        </div>
      </div>

      {/* viewport tabs */}
      <div className="flex h-[26px] shrink-0 pl-[65px]">
        <BottomTab label="Perspective" w={75.5} tw={60} active />
        <BottomTab label="Through Finger" w={95.5} tw={81} />
        <BottomTab label="Side View" w={64.5} tw={50} />
        <BottomTab label="Looking Down" w={92} tw={77} />
        <BottomTab w={26} active />
      </div>

      {/* object snaps */}
      <div className="flex h-[21px] shrink-0 items-center border-b border-[#c0c9de] pl-[3px]">
        <div className="mr-[3px] h-full w-[3px] border-x border-[#d0d4e2]" />
        {snaps.map(([s, w, tw]) => (
          <div key={s} className="flex shrink-0 items-center" style={{ width: w }}>
            <div className="mr-[3px] h-[13px] w-[13px] border border-[#333] bg-white" />
            <Fit w={tw} className="pt-px">{s}</Fit>
          </div>
        ))}
        <div className="flex w-[68px] items-center gap-1"><div className="h-[11px] w-[11px] border border-[#bcbcbc] bg-[#dedede]" /><Fit w={37} className="pt-px">Project</Fit></div>
        <div className="flex items-center gap-1"><div className="h-[11px] w-[11px] border border-[#bcbcbc] bg-[#dedede]" /><Fit w={38} className="pt-px">Disable</Fit></div>
      </div>

      {/* status bar */}
      <div className="flex h-[20px] shrink-0">
        <div className="flex w-[50px] items-center border-r border-[#c0c9de] pt-px pl-[6px]"><Fit w={37}>CPlane</Fit></div>
        <div className="flex w-[88px] items-center justify-center border-r border-[#c0c9de] pt-px"><Fit w={35}>x 0.501</Fit></div>
        <div className="flex w-[88px] items-center justify-center border-r border-[#c0c9de] pt-px"><Fit w={36}>y 6.464</Fit></div>
        <div className="flex w-[88px] items-center justify-center border-r border-[#c0c9de] pt-px"><Fit w={35}>z 0.000</Fit></div>
        <div className="flex w-[88px] items-center justify-center border-r border-[#c0c9de] pt-px"><Fit w={59}>Millimeters</Fit></div>
        <div className="flex w-[168px] items-center gap-[2px] border-r border-[#c0c9de] pt-px pl-[3px]">
          <div className="h-[14px] w-[14px] border border-black bg-[#ff7f0e]" />
          <Fit w={83}>Cutting Objects</Fit>
        </div>
        {panes.map(([p, w, tw, on]) => (
          <div key={p} className={on ? "flex shrink-0 items-center justify-center border-r border-[#c0c9de] bg-[#e3f1fc] pt-px pr-px font-bold" : "flex shrink-0 items-center justify-center border-r border-[#c0c9de] pt-px"} style={{ width: w }}>
            <Fit w={tw}>{p}</Fit>
          </div>
        ))}
        <div className="flex flex-1 items-center pt-px"><Fit w={131.5}>Minutes from last save: 0</Fit></div>
        <div className="w-2 border-l border-[#c0c9de]" />
      </div>

      {/* taskbar */}
      <div className="flex h-10 shrink-0 items-center bg-linear-to-r from-[#1a1f2a] via-[#182532] to-[#1a202b]">
        <div className="flex w-12 justify-center">
          <svg viewBox="0 0 16 16" className="h-4 w-4" fill="#fff"><path d="M0 2.300L6.800 1.400V7.600H0ZM7.600 1.300L16 0V7.600H7.600ZM0 8.400H6.800V14.700L0 13.800ZM7.600 8.400H16V16L7.600 14.800Z" /></svg>
        </div>
        <div className="flex h-10 w-[344px] items-center border border-[#5a5a5a] bg-[#323232] pl-[11px] text-[#cfcfcf]">
          <svg viewBox="0 0 16 16" className="h-4 w-4" fill="none" stroke="#e4e4e4" strokeWidth="1.300"><circle cx="10" cy="6" r="5.200" /><path d="M6.300 9.700L.8 15.300" /></svg>
          <Fit w={128} className="ml-3 pb-px text-[15px] leading-5">Type here to search</Fit>
        </div>
        <div className="flex w-12 justify-center"><svg viewBox="0 0 16 16" className="h-4 w-4" fill="none" stroke="#fff" strokeWidth="2"><circle cx="8" cy="8" r="6.800" /></svg></div>
        <div className="flex w-[50px] justify-center pr-[3px]">
          <svg viewBox="0 0 18 16" className="h-4 w-[18px]" fill="none" stroke="#fff" strokeWidth="1.200"><path d="M1 4.500H11.500V11.500H1ZM1 0V2H11.500V0M1 16V14H11.500V16M15.500 0V3M15.500 7V16" /><path d="M14 4H17V6.500H14Z" fill="#fff" stroke="none" /></svg>
        </div>
        <TaskApp>
          <svg viewBox="0 0 22 18" className="h-[18px] w-[22px]"><path d="M0 0H8L10 2H22V18H0Z" fill="#f5c242" /><path d="M0 4H22V18H0Z" fill="#ffd765" /><path d="M0 0H8V3H0Z" fill="#e5a01a" /><path d="M4 18V11Q4 10 5 10H17Q18 10 18 11V18H14.500V14H7.500V18Z" fill="#3f9ad8" /></svg>
        </TaskApp>
        <TaskApp>
          <svg viewBox="0 0 20 20" className="h-5 w-5"><path d="M0 9Q1.500 0 10.500 0 20 .5 19.800 11.500H6.500Q7 16 12 16 15.500 16 18.500 14.300V18.500Q15.500 20 11.500 20 3 20 2.500 12 2.700 7 7.500 4.500 6.500 6 6.400 7.800H13.500Q13.500 4 9.700 4 4 4 0 9Z" fill="#0078d7" /></svg>
        </TaskApp>
        <TaskApp>
          <svg viewBox="0 0 22 20" className="h-5 w-[22px]"><rect width="22" height="20" fill="#1583c4" /><path d="M0 0H11V5L6 14H0Z" fill="#7ac142" /><path d="M12 0H22V7L12 4Z" fill="#38b0c8" /><path d="M9 4H14Q19.500 5 18.500 10 17 15.500 11 16H5L6 13.500H10.500Q15 13 15.500 9.500 15.500 6.500 12.500 6.500H8.500ZM9 8H12L10.500 12H6.500Q7 9 9 8Z" fill="#fff" fillRule="evenodd" /></svg>
        </TaskApp>
        <TaskApp>
          <svg viewBox="0 0 22 22" className="h-[22px] w-[22px]"><circle cx="11" cy="11" r="11" fill="#fbc116" /><path d="M1.500 5.500A11 11 0 0 1 20.500 5.500H11A5.500 5.500 0 0 0 6 8.500Z" fill="#e33b2e" /><path d="M1.500 5.500A11 11 0 0 0 10 22L15.500 14A5.500 5.500 0 0 1 6.200 13.500Z" fill="#2da94f" /><circle cx="11" cy="11" r="5.200" fill="#fff" /><circle cx="11" cy="11" r="4.100" fill="#4285f4" /></svg>
        </TaskApp>
        <TaskApp>
          <svg viewBox="0 0 21 21" className="h-[21px] w-[21px]"><rect width="21" height="21" rx="1" fill="#b30b0b" /><path d="M0 0H21V9L0 14Z" fill="#d81414" /><path d="M4 16Q9 13 10.500 5 9 4 9.500 7 12 13 17 13 17 11 12 12 6 13 4 16Z" fill="none" stroke="#fff" strokeWidth="1.200" /></svg>
        </TaskApp>
        <TaskApp>
          <svg viewBox="0 0 24 24" className="h-6 w-6"><rect width="24" height="24" rx="1" fill="#0c7bdc" /><circle cx="12" cy="12" r="10" fill="#fff" /><path d="M3.500 12L8.500 8V10.500H15.500V8L20.500 12 15.500 16V13.500H8.500V16Z" fill="#0c7bdc" /></svg>
        </TaskApp>
        <TaskApp>
          <svg viewBox="0 0 24 24" className="h-6 w-6"><path d="M3 4L5 7 8 5 11 6Q12 2 15 0 16 4 20 6 24 11 22 17 19 24 12 24 3 23 1 15 0 9 3 4Z" fill="#ff7a1a" /><path d="M15 0Q16 4 20 6 24 11 22 17 20 20 17 21 21 12 14 7Z" fill="#ffd53a" /><path d="M1 14Q3 24 12 24 18 24 21 19 12 23 6 17Z" fill="#e8186c" /><circle cx="12" cy="13" r="5" fill="#7a3fe0" /><path d="M7 10Q10 8 14 11L10 13Z" fill="#ffb02a" /></svg>
        </TaskApp>
        <TaskApp active><Rhino className="h-6 w-6" /></TaskApp>
        <svg viewBox="1360 860 125 40" className="ml-auto h-10 w-[125px]" fill="none" stroke="#fff" strokeWidth="1.300">
          <path d="M1369.500 883L1375 877.500 1380.500 883" />
          <path d="M1394 885Q1390 884 1391.500 880.500 1393 878 1396 878.500 1399 873 1403 877 1407 878 1407 882 1408 885 1404 885.500Z" fill="#fff" stroke="none" />
          <path d="M1392 884L1403 878Q1408 881 1406.500 884.500Z" fill="#c8ccd2" stroke="none" />
          <path d="M1420 874.500H1430.500V883.500H1417.500V879M1415.500 874H1419.500V878H1415.500ZM1424 884V886.500M1419 886.500H1428" />
          <path d="M1439.500 878V882H1442L1445.500 885.500V874.500L1442 878ZM1448 877Q1450 880 1448 883" />
          <path d="M1450.500 875Q1453.500 880 1450.500 885M1453 873.500Q1457 880 1453 886.500" stroke="#777f88" />
          <path d="M1467 873L1471 875.500 1467 878 1463 875.500ZM1475 873L1479 875.500 1475 878 1471 875.500ZM1467 878L1471 880.500 1467 883 1463 880.500ZM1475 878L1479 880.500 1475 883 1471 880.500ZM1471 881.500L1475 884 1471 887 1467 884Z" fill="#fff" stroke="none" />
        </svg>
        <div className="-mt-[2px] flex w-[61px] flex-col items-center gap-[5px] pr-px text-white">
          <Fit w={49} className="leading-[13px]">11:38 AM</Fit>
          <Fit w={58} className="leading-[13px]">12/17/2019</Fit>
        </div>
        <svg viewBox="1546 860 54 40" className="h-10 w-[54px]">
          <path d="M1559 872H1575V884H1566L1563 887V884H1559Z" fill="#fff" />
          <path d="M1561.500 875.500H1572.500M1561.500 878.500H1572.500M1561.500 881.500H1568" stroke="#1a202b" />
          <circle cx="1574.500" cy="887.500" r="8" fill="#3a3d42" stroke="#8c9096" />
          <text x="1571.500" y="892" fill="#fff" className="font-['Open_Sans',sans-serif] text-[11.5px] font-semibold">5</text>
          <path d="M1595.500 860V900" stroke="#6d737b" />
        </svg>
      </div>
    </div>
  );
}
